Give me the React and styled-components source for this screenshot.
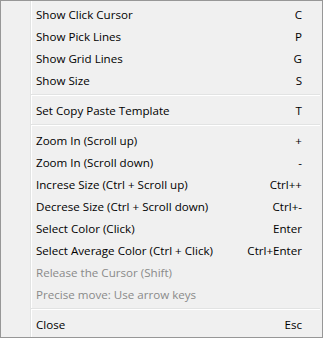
import styled, { createGlobalStyle } from "styled-components"

const Global = createGlobalStyle`
  body {
    margin: 0;
    background: #ffffff;
  }
`

const Menu = styled.div`
  width: 323px;
  height: 338px;
  box-sizing: border-box;
  border: 1px solid #979797;
  padding: 2px;
  background: linear-gradient(
    to right,
    #f0f0f0 29px,
    #e2e3e3 29px 30px,
    #ffffff 30px 31px,
    #f0f0f0 31px
  );
  font-family: "Open Sans", "Noto Sans", sans-serif;
  font-size: 11.6px;
  color: #000000;
  display: flex;
  flex-direction: column;
`

const Item = styled.div`
  height: 22px;
  display: flex;
  align-items: center;
  justify-content: space-between;
  padding: 0 18px 0 33px;
  color: ${(p) => (p.disabled ? "#8a8a8a" : "#000000")};
  white-space: nowrap;
`

const Shortcut = styled.span`
  text-align: right;
`

const Separator = styled.div`
  height: 8px;
  margin-left: 28px;
  display: flex;
  flex-direction: column;
  justify-content: center;

  &::before {
    content: "";
    display: block;
    height: 1px;
    background: #e2e3e3;
  }
  &::after {
    content: "";
    display: block;
    height: 1px;
    background: #ffffff;
  }
`

const groups = [
  [
    ["Show Click Cursor", "C"],
    ["Show Pick Lines", "P"],
    ["Show Grid Lines", "G"],
    ["Show Size", "S"],
  ],
  [["Set Copy Paste Template", "T"]],
  [
    ["Zoom In (Scroll up)", "+"],
    ["Zoom In (Scroll down)", "-"],
    ["Increse Size (Ctrl + Scroll up)", "Ctrl++"],
    ["Decrese Size (Ctrl + Scroll down)", "Ctrl+-"],
    ["Select Color (Click)", "Enter"],
    ["Select Average Color (Ctrl + Click)", "Ctrl+Enter"],
    ["Release the Cursor (Shift)", "", true],
    ["Precise move: Use arrow keys", "", true],
  ],
  [["Close", "Esc"]],
]

const App = () => {
  return (
    <>
      <Global />
      <Menu>
        {groups.map((group, gi) => (
          <div key={gi}>
            {gi > 0 && <Separator />}
            {group.map(([label, key, disabled]) => (
              <Item key={label} disabled={disabled}>
                <span>{label}</span>
                <Shortcut>{key}</Shortcut>
              </Item>
            ))}
          </div>
        ))}
      </Menu>
    </>
  )
}

export default App
